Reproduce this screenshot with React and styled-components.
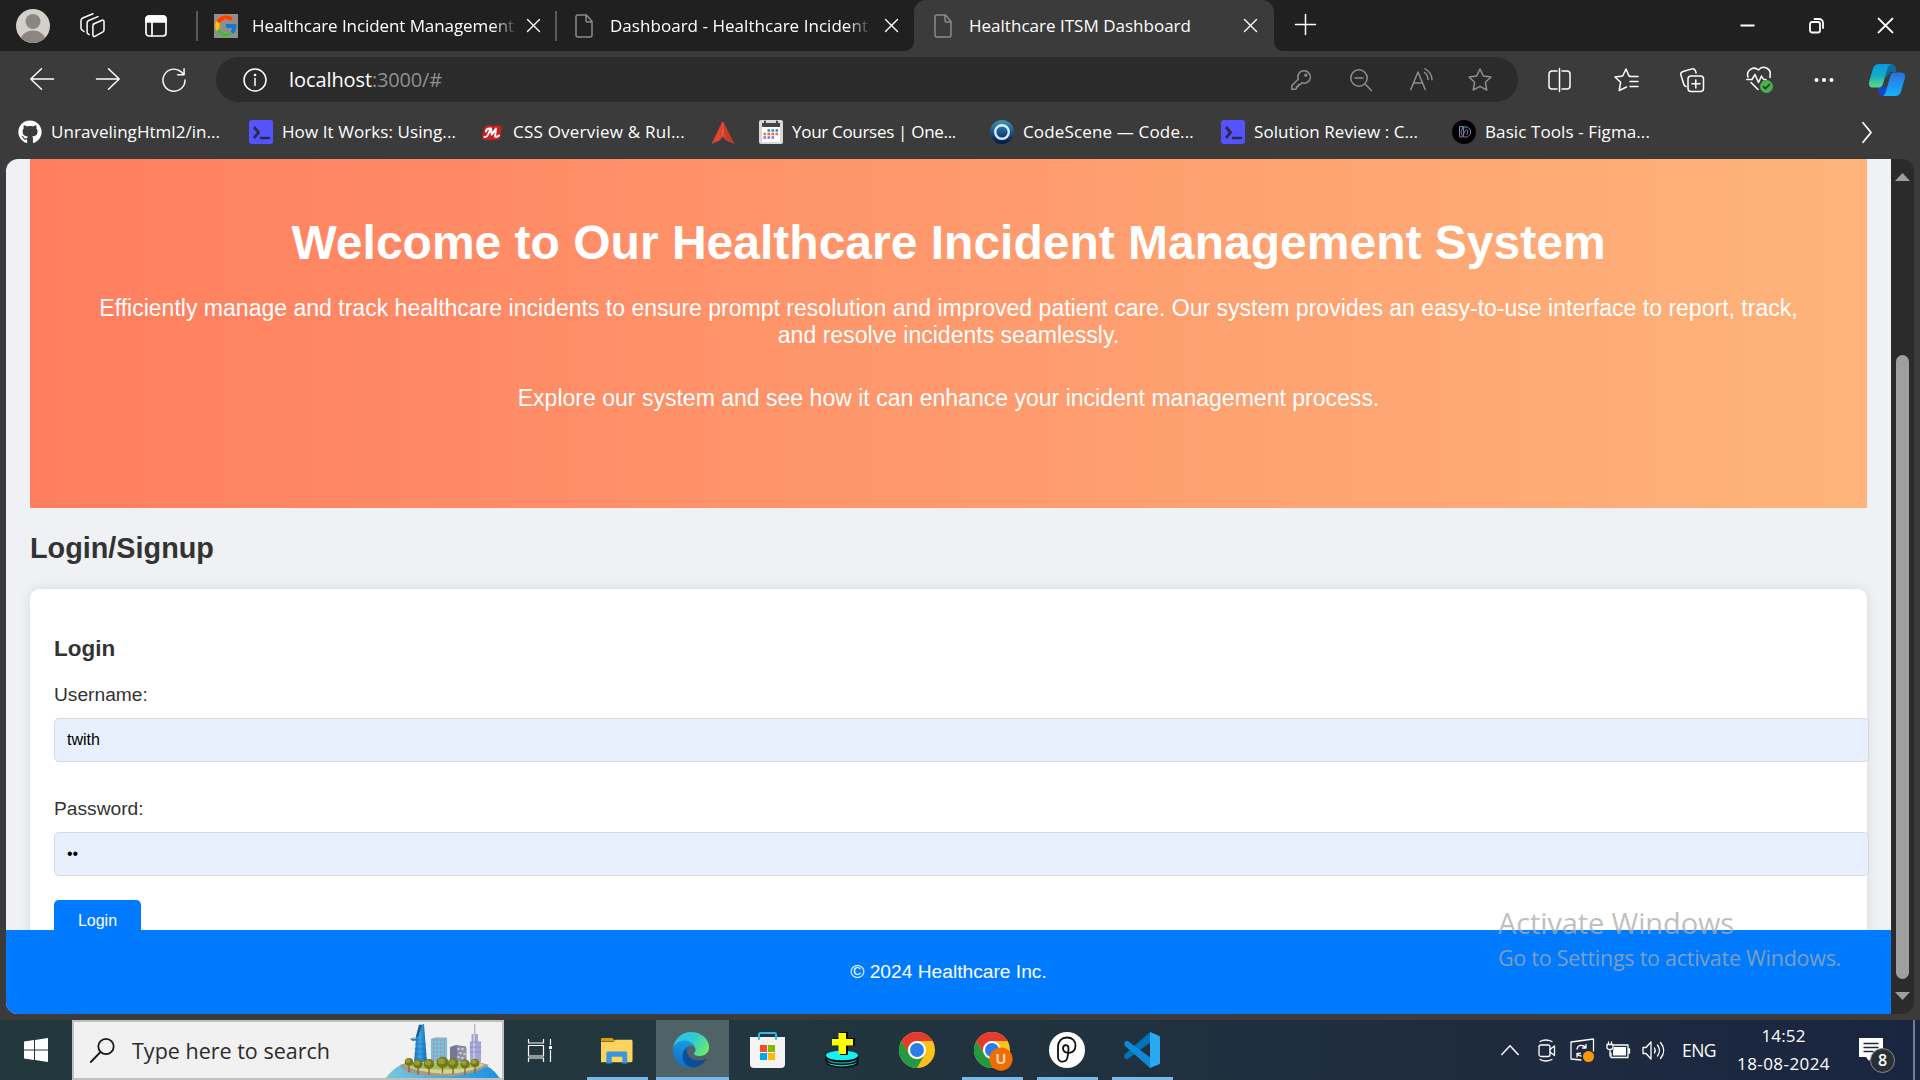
import React, { useLayoutEffect, useRef, useState } from "react";
import styled, { createGlobalStyle } from "styled-components";
import { FaGithub } from "react-icons/fa";
import { FcGoogle } from "react-icons/fc";

const ui = `"Open Sans", "Noto Sans", sans-serif`;
const arial = `"Liberation Sans", Arial, sans-serif`;

const Global = createGlobalStyle`
  * { box-sizing: border-box; }
  html, body { margin: 0; padding: 0; background: #3b3b3b; overflow: hidden; }
`;

/* ---------- shared ---------- */
const Screen = styled.div`
  position: relative;
  width: 1920px;
  height: 1080px;
  display: flex;
  flex-direction: column;
  overflow: hidden;
  background: #3b3b3b;
  font-family: ${ui};
`;
const Icon = styled.svg`
  display: block;
  flex: none;
  width: ${(p) => p.$w}px;
  height: ${(p) => p.$h || p.$w}px;
  margin-left: ${(p) => p.$ml || 0}px;
  margin-top: ${(p) => p.$mt || 0}px;
  overflow: visible;
  fill: none;
  stroke: ${(p) => p.$c || "none"};
  stroke-width: ${(p) => p.$sw || 1.5};
  stroke-linecap: round;
  stroke-linejoin: round;
`;
const Label = styled.span`
  display: block;
  flex: none;
  width: ${(p) => p.$w}px;
  margin-left: ${(p) => p.$ml || 0}px;
  margin-top: ${(p) => p.$mt || 0}px;
  font-size: ${(p) => p.$size || 17}px;
  line-height: 24px;
  color: ${(p) => p.$color || "#fff"};
  white-space: nowrap;
  mask-image: ${(p) => (p.$fade ? "linear-gradient(90deg,#000 92%,rgba(0,0,0,.15) 100%)" : "none")};
`;

/* Tracks a label so that its text spans the given width. */
function Fit({ w, children, ...rest }) {
  const ref = useRef(null);
  const [ls, setLs] = useState(0);
  useLayoutEffect(() => {
    const n = ref.current.textContent.length;
    setLs((w - ref.current.getBoundingClientRect().width) / n);
  }, [w]);
  return (
    <Label $w={w} {...rest}>
      <span ref={ref} style={{ letterSpacing: ls }}>{children}</span>
    </Label>
  );
}

/* ---------- tab strip ---------- */
const TabStrip = styled.div`
  display: flex;
  flex: none;
  height: 51px;
  background: #202020;
`;
const StripLeft = styled.div`
  display: flex;
  align-items: center;
  width: 197px;
  padding-left: 16px;
`;
const Tab = styled.div`
  position: relative;
  display: flex;
  align-items: center;
  width: ${(p) => p.$w}px;
  height: 51px;
  padding-left: ${(p) => p.$pl}px;
  background: ${(p) => (p.$active ? "#3b3b3b" : "transparent")};
  border-radius: ${(p) => (p.$active ? "12px 12px 0 0" : "0")};
  ${(p) =>
    p.$active &&
    `&::before, &::after { content: ""; position: absolute; bottom: 0; width: 9px; height: 9px; }
     &::before { left: -9px; background: radial-gradient(circle at 0 0, transparent 8.5px, #3b3b3b 9px); }
     &::after { right: -9px; background: radial-gradient(circle at 100% 0, transparent 8.5px, #3b3b3b 9px); }`}
`;
const TabDivider = styled.i`
  flex: none;
  width: 2px;
  height: 30px;
  margin: 11px 0 0 -1px;
  background: #5a5a5a;
`;
const GoogleTile = styled.span`
  display: flex;
  align-items: center;
  justify-content: center;
  width: 24px;
  height: 24px;
  background: #8f8f8f;
`;
const WindowButtons = styled.div`
  display: flex;
  align-items: center;
  margin-left: auto;
  padding-right: 27px;
`;

/* ---------- toolbar ---------- */
const Toolbar = styled.div`
  display: flex;
  flex: none;
  align-items: center;
  height: 57px;
  padding: 0 15px 0 30px;
`;
const Address = styled.div`
  display: flex;
  align-items: center;
  width: 1302px;
  height: 45px;
  margin-left: 29px;
  padding: 0 26px 0 27px;
  border-radius: 23px;
  background: #2b2b2b;
`;
const Bookmarks = styled.div`
  display: flex;
  flex: none;
  align-items: center;
  height: 51px;
  padding: 0 0 3px 18px;
`;
const Spacer = styled.span`
  flex: 1;
`;

/* ---------- page viewport ---------- */
const Viewport = styled.div`
  display: flex;
  flex: none;
  width: 1908px;
  height: 855px;
  margin-left: 6px;
  border-radius: 12px;
  overflow: hidden;
  background: #2b2b2b;
`;
const Page = styled.div`
  display: flex;
  flex-direction: column;
  width: 1885px;
  background: #f0f1f5;
  font-family: ${arial};
  color: #333;
`;
const Content = styled.main`
  flex: none;
  height: 771px;
  padding: 0 24px;
  overflow: hidden;
`;
const Banner = styled.section`
  height: 349px;
  padding: 56px 48px 0;
  background: linear-gradient(to right, #ff7e5f, #feb47b);
  color: #fff;
  text-align: center;
`;
const BannerTitle = styled.h1`
  margin: 0;
  font-size: 48px;
  line-height: 55px;
`;
const BannerText = styled.p`
  margin: ${(p) => p.$mt}px 0 0;
  font-size: 23.04px;
  line-height: 27px;
`;
const SectionTitle = styled.h2`
  margin: 24px 0;
  font-size: 28.8px;
  line-height: 33px;
`;
const Card = styled.section`
  height: 400px;
  padding: 47px 24px 0;
  border-radius: 9.6px;
  background: #fff;
  box-shadow: 0 0 12px rgba(0, 0, 0, 0.1);
`;
const CardTitle = styled.h3`
  margin: 0;
  font-size: 22.46px;
  line-height: 26px;
`;
const FieldLabel = styled.label`
  display: block;
  margin-top: ${(p) => p.$mt}px;
  font-size: 19.2px;
  line-height: 22px;
`;
const Field = styled.input`
  display: block;
  width: 1815px;
  height: 44px;
  margin: 12px 0 0;
  padding: 0 12px;
  border: 1px solid #d9d9d9;
  border-radius: 4.8px;
  background: #e8f0fe;
  font-family: ${arial};
  font-size: 16px;
  color: #000;
  outline: none;
`;
const LoginButton = styled.button`
  display: block;
  width: 87px;
  height: 42px;
  margin-top: 24px;
  padding: 0;
  border: 0;
  border-radius: 4.8px;
  background: #007bff;
  color: #fff;
  font-family: ${arial};
  font-size: 16px;
`;
const Footer = styled.footer`
  display: flex;
  flex: none;
  align-items: center;
  justify-content: center;
  height: 84px;
  background: #007bff;
  color: #fff;
  font-size: 19.2px;
`;
const ScrollTrack = styled.div`
  display: flex;
  flex-direction: column;
  align-items: center;
  width: 23px;
  padding: 14px 1px 0 0;
`;
const Thumb = styled.div`
  width: 13px;
  height: 624px;
  margin: 174px 0 13px 1px;
  border-radius: 7px;
  background: #9f9f9f;
`;

/* ---------- taskbar ---------- */
const Taskbar = styled.div`
  display: flex;
  flex: none;
  height: 60px;
  margin-top: 6px;
  background: linear-gradient(90deg, #23383d 0%, #21363e 40%, #20303f 62%, #1e2b3f 78%, #1a2540 100%);
`;
const StartButton = styled.div`
  display: flex;
  align-items: center;
  width: 72px;
  padding-left: 24px;
`;
const SearchBox = styled.div`
  display: flex;
  align-items: center;
  width: 432px;
  padding-left: 16px;
  border: 2px solid #c0c0c0;
  background: #f1f1f1;
  overflow: hidden;
`;
const TaskSlot = styled.div`
  display: flex;
  align-items: center;
  width: 76px;
  padding-left: 24px;
`;
const Apps = styled.div`
  display: grid;
  grid-template-columns: repeat(8, 75px);
`;
const AppButton = styled.div`
  display: flex;
  align-items: center;
  justify-content: center;
  width: ${(p) => (p.$active ? 73 : 61)}px;
  height: 60px;
  margin-left: ${(p) => (p.$active ? 1 : 7)}px;
  padding-top: ${(p) => (p.$open ? 3 : 0)}px;
  padding-right: ${(p) => (p.$active ? 3 : 1)}px;
  border-bottom: ${(p) => (p.$open ? "3px solid #76b9ed" : "0")};
  background: ${(p) => (p.$active ? "#4f6268" : "transparent")};
`;
const Tray = styled.div`
  display: flex;
  align-items: center;
  width: 740px;
  padding-left: 321px;
`;
const Clock = styled.div`
  display: flex;
  flex-direction: column;
  align-items: center;
  gap: 4px;
  width: 91px;
  margin: 0 0 0 22px;
`;
const Notice = styled.div`
  position: relative;
  margin: -2px 0 0 30px;
`;
const NoticeBadge = styled.span`
  position: absolute;
  left: 11px;
  top: 10px;
  width: 25px;
  height: 25px;
  border: 1.5px solid #85898f;
  border-radius: 50%;
  background: #2b2f36;
  color: #fff;
  font-size: 16px;
  font-weight: 600;
  line-height: 22px;
  text-align: center;
`;
const DesktopEdge = styled.i`
  width: 2px;
  height: 60px;
  margin-left: 30px;
  background: #737a8b;
`;
const Watermark = styled.div`
  position: absolute;
  left: 1498px;
  top: 903px;
  color: rgba(170, 170, 170, 0.75);
  pointer-events: none;
`;
const WatermarkLine = styled.div`
  height: ${(p) => p.$h}px;
  display: flex;
  align-items: center;
`;

/* ---------- drawings ---------- */
const Close = ({ s = 13, ...r }) => (
  <Icon $w={s} viewBox="0 0 13 13" $c="#fff" $sw={1.4} {...r}><path d="M.5 .5 12.5 12.5M12.5 .5 .5 12.5" /></Icon>
);
const Doc = (r) => (
  <Icon $w={18} $h={24} viewBox="0 0 18 24" $c="#8a8a8a" {...r}>
    <path d="M1 3a2 2 0 0 1 2-2h8.500l5.500 6.500V21a2 2 0 0 1-2 2H3a2 2 0 0 1-2-2zM11 1v5.500a1.500 1.500 0 0 0 1.500 1.500H17" />
  </Icon>
);
const Terminal = (r) => (
  <Icon $w={24} viewBox="0 0 24 24" {...r}>
    <rect width="24" height="24" rx="3" fill="#5553ff" />
    <path d="M5 7l4.500 5.500L5 18" stroke="#2b2b44" strokeWidth="2.800" strokeLinecap="butt" />
    <path d="M12 18h8" stroke="#2b2b44" strokeWidth="2.600" />
  </Icon>
);
const Chrome = ({ badge }) => (
  <Icon $w={36} viewBox="0 0 48 48">
    <circle cx="24" cy="24" r="24" fill="#fcc21b" />
    <path d="M3.200 12A24 24 0 0 1 44.800 12H24a12 12 0 0 0-10.400 18z" fill="#e33b2e" />
    <path d="M3.200 12A24 24 0 0 0 24 48l10.400-18a12 12 0 0 1-20.800 0z" fill="#249944" />
    <circle cx="24" cy="24" r="12" fill="#fff" />
    <circle cx="24" cy="24" r="9.300" fill="#2a7cec" />
    {badge && (
      <g>
        <circle cx="36" cy="36" r="15.500" fill="#ef6c00" />
        <text x="36" y="43" textAnchor="middle" fontFamily="Open Sans, sans-serif" fontSize="20" fontWeight="700" fill="#f6d3b4">U</text>
      </g>
    )}
  </Icon>
);
const Edge = () => (
  <Icon $w={36} viewBox="0 0 256 256">
    <defs>
      <linearGradient id="e1" x1="0" x2="1"><stop offset="0" stopColor="#0b4fa0" /><stop offset="1" stopColor="#114a8b" /></linearGradient>
      <linearGradient id="e2" x1=".6" y1="0" x2=".3" y2="1"><stop offset="0" stopColor="#1b9de2" /><stop offset="1" stopColor="#0b6fd0" /></linearGradient>
      <linearGradient id="e3" x1="0" y1=".2" x2="1" y2=".6"><stop offset="0" stopColor="#35c1f1" /><stop offset=".5" stopColor="#2fc8d2" /><stop offset="1" stopColor="#66eb6e" /></linearGradient>
    </defs>
    <path fill="url(#e1)" d="M231 190.500c-3.400 1.800-6.900 3.400-10.500 4.700a101.700 101.700 0 0 1-35.900 6.500c-47.300 0-88.500-32.500-88.500-74.300 0-11.800 6.400-21.900 16-27.300-42.800 1.800-53.800 46.400-53.800 72.500 0 74 68.100 81.400 82.800 81.400 7.900 0 19.800-2.300 27-4.600l1.300-.4a128.300 128.300 0 0 0 66.600-52.800 4 4 0 0 0-5-5.700z" />
    <path fill="url(#e2)" d="M105.700 241.400a79.200 79.200 0 0 1-22.700-21.300 80.700 80.700 0 0 1 29.500-120c3.200-1.500 8.500-4.200 15.600-4.100 10.200.1 19.800 5 25.900 13.100a32.100 32.100 0 0 1 6.400 18.700c0-.2 24.500-79.600-80-79.600-43.900 0-80 41.700-80 78.200a130.200 130.200 0 0 0 12.100 56 128 128 0 0 0 156.400 67 75.600 75.600 0 0 1-63-8z" />
    <path fill="url(#e3)" d="M152.300 148.900c-.9 1-3.400 2.500-3.400 5.600 0 2.600 1.700 5.200 4.800 7.300 14.400 10.100 41.700 8.700 41.800 8.700 10.700 0 21.200-2.900 30.500-8.300a61.900 61.900 0 0 0 30.500-53.400c.3-22.400-8-37.300-11.300-43.900C223.900 23.900 177.800 0 128 0A128 128 0 0 0 0 126.200C.5 89.700 36.800 60.200 80 60.200c3.500 0 23.500.3 42 10.100 16.400 8.600 24.900 18.900 30.900 29.200 6.200 10.700 7.300 24.100 7.300 29.500 0 5.300-2.700 13.300-7.900 19.900z" />
  </Icon>
);
const trees = [[27, 41, 4.2], [36, 43, 4.8], [47, 43, 5.2], [60.5, 41.500, 6], [71, 42.500, 5.4], [83, 43, 4.7], [93, 42, 4.5]];
const City = () => (
  <Icon $w={120} $h={56} $ml={52} viewBox="0 0 120 56">
    <defs>
      <linearGradient id="sea"><stop offset="0" stopColor="#7cc8dc" /><stop offset="1" stopColor="#1c90e2" /></linearGradient>
      <linearGradient id="twr"><stop offset="0" stopColor="#1b6fb4" /><stop offset=".45" stopColor="#37a5e6" /><stop offset="1" stopColor="#1a68ad" /></linearGradient>
    </defs>
    <path d="M1 60Q14 40 30 41H95Q111 43 120 60z" fill="url(#sea)" />
    <path d="M32 41 34.500 12 38 3 42 2 45 41z" fill="url(#twr)" />
    <path d="M28 16.500 36 15 40 3.500 37 2.500 34 15z" fill="#215d94" />
    <path d="M28 16.500h9v2.200h-7z" fill="#2a7dbd" />
    <path d="M33.500 22h10M33 27h10.500M33 32h11M32.500 37h12" stroke="#1c72b8" strokeWidth=".7" />
    <path d="M49 17l4-1.500h12V42H49z" fill="#86b7cf" />
    <path d="M51.500 17v24M55 17v24M59 17v24M62.500 17v24" stroke="#a889bd" strokeWidth="1" />
    <path d="M49 20h16M49 24h16M49 28h16M49 32h16M49 36h16" stroke="#6ed0d2" strokeWidth="1.100" />
    <path d="M68 25l6-2 10 1.500V42H68z" fill="#777696" />
    <path d="M75 24l9.500 1.200V42H75z" fill="#8f90a8" />
    <path d="M76 27h1M80 27h1M78 31h1M82 32h1M76 35h1M80 36h1" stroke="#e2e4c0" strokeWidth="1.700" />
    <path d="M92.700 2v12" stroke="#c6a3a0" strokeWidth="1.200" />
    <path d="M89.500 12h6.500v8h3v20H88V20h1.500z" fill="#a3a6d3" />
    <path d="M91 12h2v29h-2z" fill="#c4c3e2" /><path d="M88 20h11M88 25h11M88 30h11" stroke="#8587bb" strokeWidth=".7" />
    <path d="M18 43Q22 53 52 54.300 90 55 107 43L96 40H27z" fill="#a39a8c" />
    <path d="M22 43Q40 51.500 62 51.700T103 43L94 40H28z" fill="#cfd58d" />
    <path d="M29 45Q62 51 98 44l-3-3H30z" fill="#a9bd5d" />
    {trees.map(([x, y, r]) => (
      <g key={x}>
        <path d={`M${x} ${y}v9`} stroke="#9a5a2a" strokeWidth="1.300" />
        <ellipse cx={x} cy={y - 1} rx={r} ry={r * 0.95} fill="#6f7a1d" />
        <ellipse cx={x - 1} cy={y - 2.200} rx={r * 0.6} ry={r * 0.5} fill="#9a9c2f" />
      </g>
    ))}
  </Icon>
);

function Tabs() {
  return (
    <TabStrip>
      <StripLeft>
        <Icon $w={34} $mt={1} viewBox="0 0 34 34">
          <defs><clipPath id="av"><circle cx="17" cy="17" r="17" /></clipPath></defs>
          <circle cx="17" cy="17" r="17" fill="#d3d0cc" />
          <g clipPath="url(#av)" fill="#8b8683"><circle cx="17" cy="12.500" r="7.500" /><ellipse cx="17" cy="32" rx="12.500" ry="10.500" /></g>
        </Icon>
        <Icon $w={25} $ml={30} viewBox="0 0 25 25" $c="#fff" $sw={1.500}>
          <path d="M13 11.300 22 7.200a1.400 1.400 0 0 1 2 1.300v8.500a2 2 0 0 1-1.100 1.800l-8 4.600a1.400 1.400 0 0 1-2-1.300v-9a2 2 0 0 1 1.100-1.800z" />
          <path d="M9 21.500 8 20.900a2 2 0 0 1-.9-1.700V10a3 3 0 0 1 1.600-2.500L18 3.600" />
          <path d="M4 18.500 2 17a2 2 0 0 1-1-1.700V7.500A3 3 0 0 1 2.700 5L13 .8" />
        </Icon>
        <Icon $w={22} $ml={40} viewBox="0 0 22 22" $c="#fff" $sw={1.700}>
          <rect x="1" y="1" width="20" height="20" rx="3" /><path d="M1 4a3 3 0 0 1 3-3h14a3 3 0 0 1 3 3v3H1z" fill="#fff" /><path d="M7 7v14" />
        </Icon>
      </StripLeft>
      <TabDivider />
      <Tab $w={358} $pl={16}>
        <GoogleTile><FcGoogle size={26} style={{ flex: "none" }} /></GoogleTile>
        <Fit $ml={14} w={262} $fade>Healthcare Incident Management</Fit>
        <Close $ml={13} />
      </Tab>
      <TabDivider />
      <Tab $w={357} $pl={18}>
        <Doc />
        <Fit $ml={17} w={258} $fade>Dashboard - Healthcare Incident</Fit>
        <Close $ml={17} />
      </Tab>
      <Tab $w={360} $pl={20} $active>
        <Doc />
        <Fit $ml={17} w={222}>Healthcare ITSM Dashboard</Fit>
        <Close $ml={53} />
      </Tab>
      <Icon $w={21} $ml={21} $mt={14} viewBox="0 0 21 21" $c="#fff" $sw={1.500}><path d="M10.500 .5v20M.5 10.500h20" /></Icon>
      <WindowButtons>
        <Icon $w={15} viewBox="0 0 15 15" $c="#fff" $sw={2}><path d="M.5 7.500h14" strokeLinecap="butt" /></Icon>
        <Icon $w={15} $ml={54} viewBox="0 0 15 15" $c="#fff" $sw={1.800}>
          <rect x="1" y="4" width="10" height="10.500" rx="2" /><path d="M5.500 1H10a4 4 0 0 1 4 4v5" />
        </Icon>
        <Close s={15} $ml={54} $sw={1.700} />
      </WindowButtons>
    </TabStrip>
  );
}

function Tools() {
  return (
    <Toolbar>
      <Icon $w={24} $h={22} $mt={-2} viewBox="0 0 24 22" $c="#fff"><path d="M23.500 11H.8M11.500 .8.8 11l10.700 10.200" /></Icon>
      <Icon $w={24} $h={22} $ml={42} $mt={-2} viewBox="0 0 24 22" $c="#fff"><path d="M.5 11h22.700M12.500 .8 23.200 11 12.500 21.200" /></Icon>
      <Icon $w={24} $ml={42} viewBox="0 0 25 25" $c="#fff"><path d="M24 12.500A11.500 11.500 0 1 1 20 4l2.500 2.500M23 .8v6.200h-6.700" /></Icon>
      <Address style={{ marginLeft: 30 }}>
        <Icon $w={24} viewBox="0 0 24 24" $c="#fff"><circle cx="12" cy="12" r="11" /><path d="M12 10.500v7" /><circle cx="12" cy="7" r=".6" fill="#fff" /></Icon>
        <Fit $ml={22} w={83} $size={20}>localhost</Fit>
        <Fit w={70} $size={20} $color="#909090">:3000/#</Fit>
        <Spacer />
        <Icon $w={20} viewBox="0 0 20 20" $c="#8f8f8f"><path d="M13 .8a6.200 6.200 0 1 1-2 12l-1.700 1.700H7.500v2H5.500v2l-.8.800H.8v-3.700L7.200 9.300A6.200 6.200 0 0 1 13 .8z" /><circle cx="14.800" cy="5.200" r=".9" fill="#8f8f8f" /></Icon>
        <Icon $w={22} $ml={39} viewBox="0 0 22 22" $c="#8f8f8f"><circle cx="9" cy="9" r="8.200" /><path d="M15 15l6.500 6.500M5 9h8" /></Icon>
        <Icon $w={23} $h={22} $ml={38} $mt={-2} viewBox="0 0 23 22" $c="#8f8f8f"><path d="M.8 21.500 8 4l7.200 17.500M3.500 15h9M14.500 4.500a9 9 0 0 1 3.500 7M15 .8a13 13 0 0 1 7 11" /></Icon>
        <Icon $w={24} $ml={35} viewBox="0 0 24 24" $c="#8f8f8f"><path d="M12 1l3.300 7 7.700 1-5.600 5.300L18.800 22 12 18.300 5.200 22l1.400-7.700L1 9l7.700-1z" /></Icon>
      </Address>
      <Icon $w={23} $h={24} $ml={30} viewBox="0 0 23 24" $c="#fff"><path d="M9 3H4a3 3 0 0 0-3 3v12a3 3 0 0 0 3 3h5M14 3h5a3 3 0 0 1 3 3v12a3 3 0 0 1-3 3h-5M11.500 .5v23" /></Icon>
      <Icon $w={24} $ml={43} viewBox="0 0 24 24" $c="#fff"><path d="M16 8 15 8 12 1 8.700 8 1 9l5.600 5.300L5.200 22.500 12.500 19M15.500 8.500H24M16 13.500h8M16 18.500h8" /></Icon>
      <Icon $w={24} $ml={42} viewBox="0 0 24 24" $c="#fff"><rect x="8" y="8" width="15.500" height="15.500" rx="3" /><path d="M15.800 12v8M12 15.800h8M6 18.500a3 3 0 0 1-2.200-2.200L.9 7A3 3 0 0 1 3 3.500L12 .9A3 3 0 0 1 15.500 3l.6 2" /></Icon>
      <Icon $w={27} $h={26} $ml={42} viewBox="0 0 27 26" $c="#fff"><path d="M2 10a6.500 6.500 0 0 1 10.500-7A6.500 6.500 0 0 1 24 8.500v2M5 15.500l7 7M.8 12.500H6l3-5 3.500 8 3-6.500 2 3.500h2.500" /><circle cx="20.500" cy="19.500" r="6.500" fill="#4caf50" stroke="none" /><path d="M17.500 19.700l2 2 4-4.200" stroke="#26402a" strokeWidth="1.800" /></Icon>
      <Icon $w={20} $h={6} $ml={41} viewBox="0 0 20 6"><g fill="#fff"><circle cx="2.500" cy="3" r="2" /><circle cx="10" cy="3" r="2" /><circle cx="17.500" cy="3" r="2" /></g></Icon>
      <Icon $w={36} $h={32} $ml={35} viewBox="0 0 36 32">
        <defs>
          <linearGradient id="c1" x1="0" y1="0" x2="0" y2="1"><stop offset="0" stopColor="#079be0" /><stop offset=".5" stopColor="#12adc4" /><stop offset="1" stopColor="#62dd7c" /></linearGradient>
          <linearGradient id="c2" x1="0" y1="0" x2="0" y2="1"><stop offset="0" stopColor="#2c70de" /><stop offset="1" stopColor="#12b4ff" /></linearGradient>
        </defs>
        <path d="M18 0h4.500q3 0 4.200 4l1 4H22l-6 6z" fill="#0b6a9e" />
        <path d="M9 23h10l-3 6q-1.500 3-4 2.500-2-.5-2.500-4z" fill="#1446cf" />
        <path d="M10 0h12q-2.500 1-3.700 5l-4 14q-1.200 4.500-5 4.500H4q-5 0-3.800-6L4 4.500Q5.500 0 10 0z" fill="url(#c1)" />
        <path d="M25 8.500h7q5 0 3.800 6l-3.500 12q-1.300 5.500-6.300 5.500H13.500q2.500-1 3.500-5l4-14q1.200-4.500 4-4.500z" fill="url(#c2)" />
      </Icon>
    </Toolbar>
  );
}

function BookmarkRow() {
  return (
    <Bookmarks>
      <FaGithub size={24} color="#fff" />
      <Fit $ml={9} w={169}>UnravelingHtml2/in...</Fit>
      <Terminal $ml={29} />
      <Fit $ml={9} w={174}>How It Works: Using...</Fit>
      <Icon $w={20} $h={17} $ml={26} viewBox="0 0 20 16">
        <path d="M5 1h13q2.500 1 1.500 4L18 14q-1 2-3 1.500H2Q-.5 14 .5 10L2 4Q3 1 5 1z" fill="#c9211e" />
        <path d="M2.500 12.500Q5 13 7 8l2-4 .8 6L14 4l-1 8q2 1 4-1M4 7q0-3 4-3" stroke="#fff" strokeWidth="2" />
      </Icon>
      <Fit $ml={11} w={172}>CSS Overview &amp; Rul...</Fit>
      <Icon $w={24} $h={22} $ml={26} $mt={2} viewBox="0 0 24 23"><path d="M11 0 0 23l9-4z" fill="#e0452f" /><path d="M12.500 0 24 23l-9.500-4z" fill="#c93a29" /><path d="M11 0h1.500l2 19-2.500-4-3 4z" fill="#ee4c36" /></Icon>
      <Icon $w={24} $ml={24} viewBox="0 0 24 24">
        <rect width="24" height="24" rx="2" fill="#d8d8d8" /><rect x="3" y="7" width="18" height="15" fill="#fff" /><path d="M3 3h18v4H3z" fill="#454545" />
        <path d="M6 1.500v3M18 1.500v3" stroke="#454545" strokeWidth="2" />
        <g strokeWidth="2.600" strokeDasharray="2.600 1.400" strokeLinecap="butt"><path d="M8.500 10.500h11" stroke="#2a8fb8" /><path d="M4.500 14h15" stroke="#ef6a3e" /><path d="M4.500 17.500h11" stroke="#8c6fc5" /></g>
      </Icon>
      <Fit $ml={9} w={164}>Your Courses | One...</Fit>
      <Icon $w={24} $ml={34} viewBox="0 0 24 24">
        <defs><linearGradient id="cs" x1="0" y1="0" x2="0" y2="1"><stop offset="0" stopColor="#3c9aa8" /><stop offset=".5" stopColor="#1b5590" /><stop offset="1" stopColor="#06173e" /></linearGradient></defs>
        <circle cx="12" cy="12" r="12" fill="url(#cs)" /><circle cx="12" cy="12" r="6.800" stroke="#dbe9f1" strokeWidth="2.400" />
      </Icon>
      <Fit $ml={9} w={171}>CodeScene — Code...</Fit>
      <Terminal $ml={27} />
      <Fit $ml={9} w={164}>Solution Review : C...</Fit>
      <Icon $w={24} $ml={34} viewBox="0 0 24 24">
        <defs><linearGradient id="fg" x1="0" y1="0" x2="0" y2="1"><stop offset="0" stopColor="#5da3b5" /><stop offset="1" stopColor="#a2619f" /></linearGradient></defs>
        <circle cx="12" cy="12" r="12" fill="#000" />
        <path d="M7.500 7v10h3l-1.500-5 2-5zM12 7h3.500l3 3v4l-3 3H12zM13.500 10.500l-2 3.500M15 9.500q2 2.500 0 5" stroke="url(#fg)" strokeWidth="1" />
      </Icon>
      <Fit $ml={9} w={165}>Basic Tools - Figma...</Fit>
      <Icon $w={10} $h={21} $ml={212} viewBox="0 0 10 21" $c="#fff" $sw={1.800}><path d="M1 .8l8 9.700-8 9.700" /></Icon>
    </Bookmarks>
  );
}

function PageView() {
  return (
    <Viewport>
      <Page>
        <Content>
          <Banner>
            <BannerTitle>Welcome to Our Healthcare Incident Management System</BannerTitle>
            <BannerText $mt={25}>
              Efficiently manage and track healthcare incidents to ensure prompt resolution and improved patient care. Our system provides an easy-to-use interface to report, track, and resolve incidents seamlessly.
            </BannerText>
            <BannerText $mt={36}>Explore our system and see how it can enhance your incident management process.</BannerText>
          </Banner>
          <SectionTitle>Login/Signup</SectionTitle>
          <Card>
            <CardTitle>Login</CardTitle>
            <FieldLabel $mt={22}>Username:</FieldLabel>
            <Field defaultValue="twith" />
            <FieldLabel $mt={36}>Password:</FieldLabel>
            <Field type="password" defaultValue="tw" />
            <LoginButton>Login</LoginButton>
          </Card>
        </Content>
        <Footer>© 2024 Healthcare Inc.</Footer>
      </Page>
      <ScrollTrack>
        <Icon $w={15} $h={8} viewBox="0 0 15 8"><path d="M7.500 0 15 8H0z" fill="#9f9f9f" /></Icon>
        <Thumb />
        <Icon $w={15} $h={8} viewBox="0 0 15 8"><path d="M7.500 8 15 0H0z" fill="#9f9f9f" /></Icon>
      </ScrollTrack>
    </Viewport>
  );
}

function TaskbarRow() {
  return (
    <Taskbar>
      <StartButton>
        <Icon $w={24} viewBox="0 0 24 24"><path d="M0 3.500 10 2v9.500H0zM11 1.900 24 0v11.500H11zM0 12.500h10V22L0 20.500zM11 12.500h13V24l-13-1.900z" fill="#fff" /></Icon>
      </StartButton>
      <SearchBox>
        <Icon $w={25} viewBox="0 0 25 25" $c="#1a1a1a" $sw={1.800}><circle cx="16" cy="8.500" r="7.700" /><path d="M10.500 14 .8 24" /></Icon>
        <Fit $ml={17} $mt={2} w={198} $size={21.500} $color="#2b2b2b">Type here to search</Fit>
        <City />
      </SearchBox>
      <TaskSlot>
        <Icon $w={24} $h={23} viewBox="0 0 24 23" $c="#fff" $sw={1.200}>
          <path strokeLinecap="butt" d="M.5 0v4h15V0M.5 6.500h15v10.500H.5zM.5 23v-4h15v4M22.500 0v6M22.500 11v12" /><path d="M21 7h3v3h-3z" fill="#fff" stroke="none" />
        </Icon>
      </TaskSlot>
      <Apps>
        <AppButton $open>
          <Icon $w={32} $h={27} viewBox="0 0 33 27">
            <path d="M0 2a1.500 1.500 0 0 1 1.500-1.500h10L15 4H0z" fill="#e09b06" /><path d="M0 4.500h13l2-2h16a1.500 1.500 0 0 1 1.500 1.500v20a1.500 1.500 0 0 1-1.500 1.500H0z" fill="#ffd45e" />
            <path d="M5.500 27V16a1.500 1.500 0 0 1 1.500-1.500h18.500A1.500 1.500 0 0 1 27 16v11h-5v-7H11v7z" fill="#3a96dd" />
          </Icon>
        </AppButton>
        <AppButton $open $active><Edge /></AppButton>
        <AppButton>
          <Icon $w={35} $h={36} viewBox="0 0 35 36">
            <path d="M0 5h35v27a4 4 0 0 1-4 4H4a4 4 0 0 1-4-4z" fill="#f3f3f3" />
            <path d="M9 7V2.500A1.500 1.500 0 0 1 10.500 1h14A1.500 1.500 0 0 1 26 2.500V7" stroke="#34b5ee" strokeWidth="2" />
            <path d="M10 13h7v7h-7z" fill="#f25022" /><path d="M18 13h7v7h-7z" fill="#7fba00" /><path d="M10 21h7v7h-7z" fill="#00a4ef" /><path d="M18 21h7v7h-7z" fill="#ffb900" />
          </Icon>
        </AppButton>
        <AppButton>
          <Icon $w={35} $h={36} viewBox="0 0 35 36">
            <ellipse cx="17.500" cy="31" rx="16" ry="5" fill="#0a0a0a" /><ellipse cx="17" cy="29.800" rx="15" ry="4.600" fill="#1fd8dc" /><ellipse cx="17" cy="28.300" rx="16.500" ry="5" fill="#0a0a0a" />
            <ellipse cx="17" cy="26.800" rx="15.500" ry="4.800" fill="#1fd8dc" /><ellipse cx="17" cy="25.200" rx="17" ry="5.200" fill="#0a0a0a" /><ellipse cx="17" cy="23.500" rx="16" ry="4.800" fill="#14f1f5" />
            <path d="M15 0h8v6h7v8h-7v9h-8v-9H8V6h7z" fill="#0a0a0a" /><path d="M13.500 1H21v6h7v6.500h-7V22h-7.500v-8.500H7V7h6.500z" fill="#ffff00" />
          </Icon>
        </AppButton>
        <AppButton><Chrome /></AppButton>
        <AppButton $open><Chrome badge /></AppButton>
        <AppButton $open>
          <Icon $w={36} viewBox="0 0 36 36">
            <circle cx="18" cy="18" r="18" fill="#fff" />
            <path d="M19.500 16C19.500 12 14 12 14 16.500C14 22.500 26.500 23 26.500 13.500C26.500 8.500 23 5.500 18 5.500C12.500 5.500 9 9.500 9 14.500V25C9 31.500 18 31 18.500 25Q19.500 21 19.500 16" stroke="#0e0e0e" strokeWidth="1.800" />
          </Icon>
        </AppButton>
        <AppButton $open>
          <Icon $w={36} viewBox="0 0 36 36">
            <path d="M.8 22.300 26 0l1 10L3.800 27q-1 .6-1.800 0L.6 25.500q-.8-1.500.2-3.200z" fill="#0073ba" />
            <path d="M.8 13.700 26 36l1-10L3.800 9Q2.800 8.400 2 9L.6 10.500q-.8 1.500.2 3.200z" fill="#1089d9" />
            <path d="M26 0l9 3.700q1 .5 1 1.600v25.400q0 1.100-1 1.600L26 36z" fill="#2aa8f2" />
          </Icon>
        </AppButton>
      </Apps>
      <Tray>
        <Icon $w={18} $h={10} viewBox="0 0 18 10" $c="#fff" $sw={1.500}><path d="M.8 9.500 9 .8l8.200 8.700" /></Icon>
        <Icon $w={18} $h={23} $ml={19} viewBox="0 0 18 23" $c="#fff" $sw={1.300}><rect x="1" y="6" width="11" height="11.500" rx="2" /><path d="M12 10.500 16.500 7v9.500L12 13M2 2.500Q7.500-.5 14 2.500M2 20.500q5.500 3 12 0" /></Icon>
        <Icon $w={24} $ml={14} viewBox="0 0 24 24" $c="#fff" $sw={1.300}>
          <path d="M11 22 1 21V4L23.500 1v12M7 11q1-4 5-3.500 2 0 3.500 2M16 6.500v3.500h-3.500M7 19v-3.500h3.500M7 15.500q1.500 2.500 4 2.500" /><circle cx="18.500" cy="18.500" r="5.500" fill="#ff9800" stroke="none" />
        </Icon>
        <Icon $w={24} $h={18} $ml={12} viewBox="0 0 24 18" $c="#fff" $sw={1.300}>
          <path d="M8 4h14v12.500H5V12M22.500 8h1v4h-1" /><path d="M8 6h12v8.500H7V10z" fill="#fff" stroke="none" /><path d="M1 3.500h6v3q0 2-3 2-3 0-3-2zM2.500 1v2M5.500 1v2M4 9v6" />
        </Icon>
        <Icon $w={23} $h={19} $ml={12} viewBox="0 0 23 19" $c="#fff" $sw={1.300}><path d="M1 6.500h3l5-5.500v17l-5-5.500H1zM12.500 7q1.500 2.500 0 5M15.500 4q4 5.500 0 11M18.500 1.500q6.500 8 0 16" /></Icon>
        <Fit $ml={17} w={34} $size={17.500}>ENG</Fit>
        <Clock>
          <Fit w={44} $size={17}>14:52</Fit>
          <Fit w={93} $size={17}>18-08-2024</Fit>
        </Clock>
        <Notice>
          <Icon $w={24} $h={23} viewBox="0 0 24 23"><path d="M0 0h24v19H13l-3 4-3-4H0z" fill="#fff" /><path d="M5 5.500h14M5 9.500h14M5 13.500h9" stroke="#1c2740" strokeWidth="1.300" /></Icon>
          <NoticeBadge>8</NoticeBadge>
        </Notice>
        <DesktopEdge />
      </Tray>
    </Taskbar>
  );
}

export default function App() {
  return (
    <Screen>
      <Global />
      <Tabs />
      <Tools />
      <BookmarkRow />
      <PageView />
      <TaskbarRow />
      <Watermark>
        <WatermarkLine $h={40}><Fit w={236} $size={29} $color="inherit">Activate Windows</Fit></WatermarkLine>
        <WatermarkLine $h={30}><Fit w={343} $size={21.500} $color="inherit">Go to Settings to activate Windows.</Fit></WatermarkLine>
      </Watermark>
    </Screen>
  );
}
